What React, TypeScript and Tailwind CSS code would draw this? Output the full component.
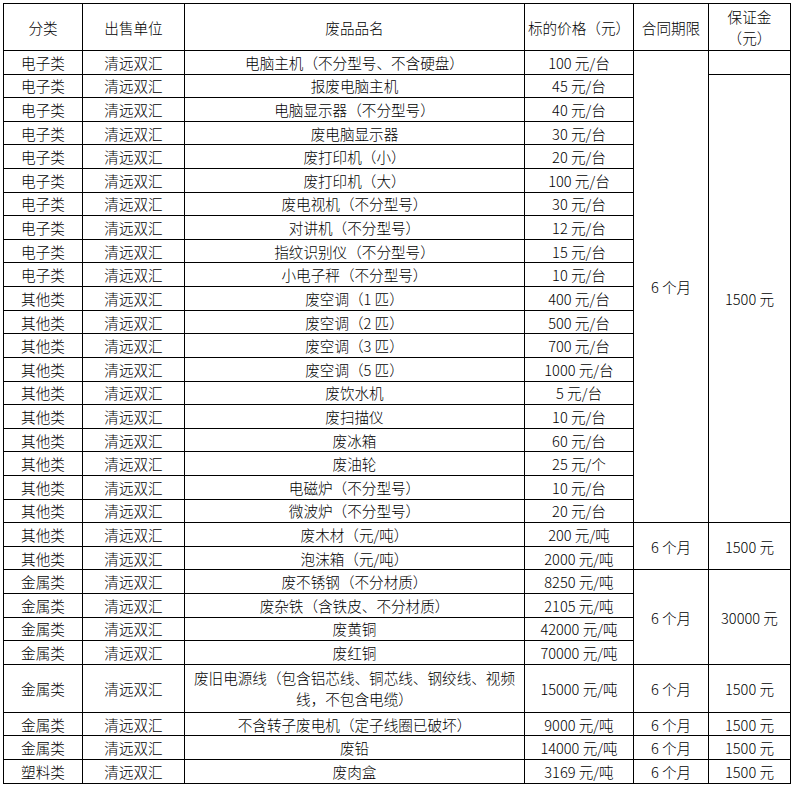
const font = { fontFamily: '"SimSun", "Noto Sans CJK SC", "Liberation Sans", sans-serif' }

type Row = {
  cat: string
  name: React.ReactNode
  price: string
  term?: { text: string; span: number }
  deposit?: { text: string; span: number }
  tall?: boolean
}

const rows: Row[] = [
  { cat: '电子类', name: '电脑主机（不分型号、不含硬盘）', price: '100 元/台', term: { text: '6 个月', span: 20 }, deposit: { text: '', span: 1 } },
  { cat: '电子类', name: '报废电脑主机', price: '45 元/台', deposit: { text: '1500 元', span: 19 } },
  { cat: '电子类', name: '电脑显示器（不分型号）', price: '40 元/台' },
  { cat: '电子类', name: '废电脑显示器', price: '30 元/台' },
  { cat: '电子类', name: '废打印机（小）', price: '20 元/台' },
  { cat: '电子类', name: '废打印机（大）', price: '100 元/台' },
  { cat: '电子类', name: '废电视机（不分型号）', price: '30 元/台' },
  { cat: '电子类', name: '对讲机（不分型号）', price: '12 元/台' },
  { cat: '电子类', name: '指纹识别仪（不分型号）', price: '15 元/台' },
  { cat: '电子类', name: '小电子秤（不分型号）', price: '10 元/台' },
  { cat: '其他类', name: '废空调（1 匹）', price: '400 元/台' },
  { cat: '其他类', name: '废空调（2 匹）', price: '500 元/台' },
  { cat: '其他类', name: '废空调（3 匹）', price: '700 元/台' },
  { cat: '其他类', name: '废空调（5 匹）', price: '1000 元/台' },
  { cat: '其他类', name: '废饮水机', price: '5 元/台' },
  { cat: '其他类', name: '废扫描仪', price: '10 元/台' },
  { cat: '其他类', name: '废冰箱', price: '60 元/台' },
  { cat: '其他类', name: '废油轮', price: '25 元/个' },
  { cat: '其他类', name: '电磁炉（不分型号）', price: '10 元/台' },
  { cat: '其他类', name: '微波炉（不分型号）', price: '20 元/台' },
  { cat: '其他类', name: '废木材（元/吨）', price: '200 元/吨', term: { text: '6 个月', span: 2 }, deposit: { text: '1500 元', span: 2 } },
  { cat: '其他类', name: '泡沫箱（元/吨）', price: '2000 元/吨' },
  { cat: '金属类', name: '废不锈钢（不分材质）', price: '8250 元/吨', term: { text: '6 个月', span: 4 }, deposit: { text: '30000 元', span: 4 } },
  { cat: '金属类', name: '废杂铁（含铁皮、不分材质）', price: '2105 元/吨' },
  { cat: '金属类', name: '废黄铜', price: '42000 元/吨' },
  { cat: '金属类', name: '废红铜', price: '70000 元/吨' },
  {
    cat: '金属类',
    name: (
      <>
        废旧电源线（包含铝芯线、铜芯线、钢绞线、视频
        <br />
        线，不包含电缆）
      </>
    ),
    price: '15000 元/吨',
    term: { text: '6 个月', span: 1 },
    deposit: { text: '1500 元', span: 1 },
    tall: true,
  },
  { cat: '金属类', name: '不含转子废电机（定子线圈已破坏）', price: '9000 元/吨', term: { text: '6 个月', span: 1 }, deposit: { text: '1500 元', span: 1 } },
  { cat: '金属类', name: '废铅', price: '14000 元/吨', term: { text: '6 个月', span: 1 }, deposit: { text: '1500 元', span: 1 } },
  { cat: '塑料类', name: '废肉盒', price: '3169 元/吨', term: { text: '6 个月', span: 1 }, deposit: { text: '1500 元', span: 1 } },
]

const cell = 'border border-black p-0 text-center align-middle'

export default function App() {
  return (
    <div className="min-h-screen bg-white pl-[3px] pt-[3px] text-black" style={font}>
      <table className="table-fixed border-collapse text-[14.6px] leading-[21px] font-light w-[787px]">
        <colgroup>
          <col className="w-[79px]" />
          <col className="w-[102px]" />
          <col className="w-[340px]" />
          <col className="w-[109px]" />
          <col className="w-[75px]" />
          <col className="w-[82px]" />
        </colgroup>
        <thead>
          <tr className="h-[47px]">
            <th className={`${cell} font-light`}>分类</th>
            <th className={`${cell} font-light`}>出售单位</th>
            <th className={`${cell} font-light`}>废品品名</th>
            <th className={`${cell} font-light`}>标的价格（元）</th>
            <th className={`${cell} font-light`}>合同期限</th>
            <th className={`${cell} font-light`}>
              保证金
              <br />
              （元）
            </th>
          </tr>
        </thead>
        <tbody>
          {rows.map((r, i) => (
            <tr key={i} className={r.tall ? 'h-[48px]' : 'h-[23.62px]'}>
              <td className={cell}>{r.cat}</td>
              <td className={cell}>清远双汇</td>
              <td className={cell}>{r.name}</td>
              <td className={cell}>{r.price}</td>
              {r.term && (
                <td className={cell} rowSpan={r.term.span}>
                  {r.term.text}
                </td>
              )}
              {r.deposit && (
                <td className={cell} rowSpan={r.deposit.span}>
                  {r.deposit.text}
                </td>
              )}
            </tr>
          ))}
        </tbody>
      </table>
    </div>
  )
}
